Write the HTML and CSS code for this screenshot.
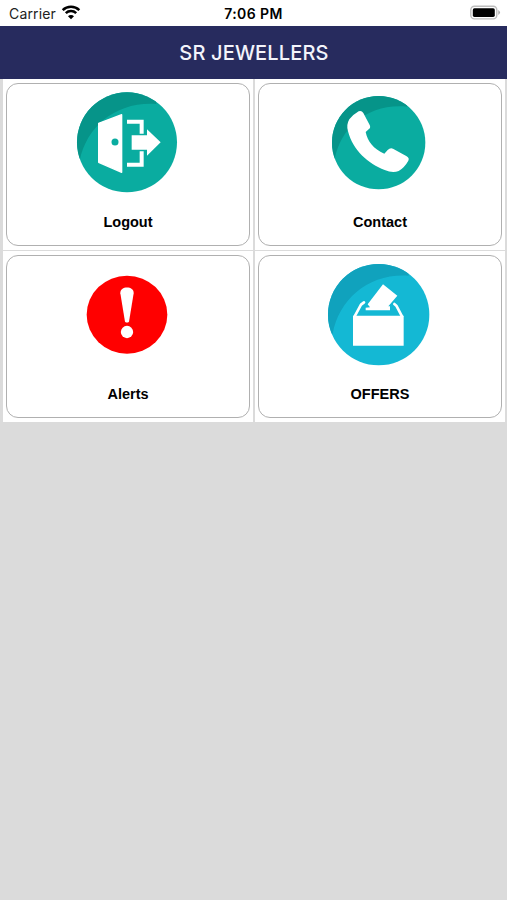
FILE: index.html
```html
<!DOCTYPE html>
<html lang="en">
<head>
<meta charset="utf-8">
<title>SR JEWELLERS</title>
<link rel="stylesheet" href="styles.css">
</head>
<body>
<div class="status">
  <div class="carrier"><span>Carrier</span>
    <svg class="wifi" width="20" height="16" viewBox="0 0 20 16" fill="none" stroke="#000" stroke-width="2.5">
      <path d="M1.7 6.1a11.8 11.8 0 0 1 16.6 0"/>
      <path d="M4.8 9.2a7.4 7.4 0 0 1 10.4 0"/>
      <path d="M7 12.2a4.2 4.2 0 0 1 6 0L10 15.2z" fill="#000" stroke="none"/>
    </svg>
  </div>
  <div class="time">7:06 PM</div>
  <div class="power">
    <svg width="31" height="16" viewBox="0 0 31 16">
      <rect x=".8" y="1.3" width="26" height="12.6" rx="3.6" fill="#fff" stroke="#bdbdbd" stroke-width="1.4"/>
      <rect x="2.8" y="3.3" width="22" height="8.6" rx="1.6"/>
      <path d="M28.3 5.1q3.4 2.4 0 5z" fill="#aaa"/>
    </svg>
  </div>
</div>
<header class="nav">SR JEWELLERS</header>
<main class="grid">
  <div class="cell"><div class="card">
    <svg class="icon" viewBox="3 6 360 360">
      <clipPath id="c1"><circle cx="180" cy="181" r="150"/></clipPath>
      <circle cx="180" cy="181" r="150" fill="#0aaca0"/>
      <path clip-path="url(#c1)" fill="#069489" d="M0 0H268V66C150 58 60 130 38 236H0z"/>
      <path fill="#fff" stroke="#fff" stroke-width="4" stroke-linejoin="round" d="M95 124L164 98V271L95 241z"/>
      <circle cx="144" cy="180" r="10.5" fill="#0aaca0"/>
      <path fill="none" stroke="#fff" stroke-width="12" d="M180 119H224V155M180 248H224V208"/>
      <path fill="#fff" d="M194 160H240V142L281 181L240 221V203H194z"/>
    </svg>
    <div class="label">Logout</div>
  </div></div>
  <div class="cell"><div class="card">
    <svg class="icon" viewBox="0 6 360 360">
      <clipPath id="c2"><circle cx="176" cy="182" r="140"/></clipPath>
      <circle cx="176" cy="182" r="140" fill="#0aaca0"/>
      <path clip-path="url(#c2)" fill="#069489" d="M0 0H262V74C148 62 62 134 44 232H0z"/>
      <path fill="#fff" d="M88 112Q100 97 116 88Q125 85 130 93L149 129Q153 137 146 142L137 150C143 178 160 201 193 215L203 204Q210 197 219 200L260 223Q269 228 265 236Q254 256 236 267Q218 275 194 264C145 245 99 206 84 148Q78 129 88 112z"/>
    </svg>
    <div class="label">Contact</div>
  </div></div>
  <div class="cell"><div class="card">
    <svg class="icon" viewBox="3 3 360 360">
      <ellipse cx="180" cy="179" rx="121" ry="117" fill="#f00"/>
      <path fill="#fff" d="M160 115C158 92 202 92 200 115L186 200Q180 205 174 200z"/>
      <circle cx="180" cy="231" r="18.5" fill="#fff"/>
    </svg>
    <div class="label">Alerts</div>
  </div></div>
  <div class="cell"><div class="card">
    <svg class="icon" viewBox="0 3 360 360">
      <clipPath id="c4"><circle cx="176" cy="179" r="152"/></clipPath>
      <circle cx="176" cy="179" r="152" fill="#14b8d4"/>
      <path clip-path="url(#c4)" fill="#10a2bd" d="M0 0H266V62C148 54 58 130 38 236H0z"/>
      <path fill="#fff" d="M99 182H251V272H99z"/>
      <path fill="none" stroke="#fff" stroke-width="8" stroke-linejoin="round" stroke-linecap="round" d="M132 142L123 149L104 184M223 147L229 152L246 184"/>
      <path fill="#fff" d="M189 88L232 122L205 154H210V166H137V158L150 157L143 148z"/>
    </svg>
    <div class="label">OFFERS</div>
  </div></div>
</main>
</body>
</html>
```

FILE: styles.css
```css
* { box-sizing: border-box; }
body {
  margin: 0;
  min-height: 900px;
  background: #dbdbdb;
  font-family: "Liberation Sans", Arial, sans-serif;
  color: #000;
}
.status {
  display: grid;
  grid-template-columns: 1fr auto 1fr;
  align-items: center;
  height: 26px;
  padding: 2px 6px 0;
  background: #fff;
  font-family: Inter, sans-serif;
  font-size: 14px;
}
.carrier {
  display: flex;
  align-items: center;
  gap: 5px;
  margin: -2px 0 0 3px;
  color: #222;
  letter-spacing: .15px;
}
.wifi { margin-top: -2px; }
.time {
  margin-top: -2px;
  font-weight: 600;
  font-size: 14px;
  letter-spacing: .4px;
}
.power {
  display: flex;
  justify-content: flex-end;
  margin-top: -2px;
}
.nav {
  display: flex;
  align-items: center;
  justify-content: center;
  height: 53px;
  padding-left: 1px;
  background: #272b5e;
  color: #f3f4fb;
  font: 500 20px Inter, sans-serif;
  letter-spacing: .15px;
}
.grid {
  display: grid;
  grid-template-columns: 250px 250px;
  grid-template-rows: 171px 171px;
  column-gap: 2px;
  row-gap: 1px;
  width: 502px;
  margin-left: 3px;
}
.cell {
  padding: 4px 3px;
  background: #fff;
}
.card {
  display: flex;
  flex-direction: column;
  align-items: center;
  height: 163px;
  border: 1px solid #b0b0b0;
  border-radius: 12px;
}
.icon {
  flex: none;
  width: 120px;
  height: 120px;
}
.label {
  margin-top: 9px;
  font-size: 14.5px;
  line-height: 18px;
  font-weight: 700;
}
```
